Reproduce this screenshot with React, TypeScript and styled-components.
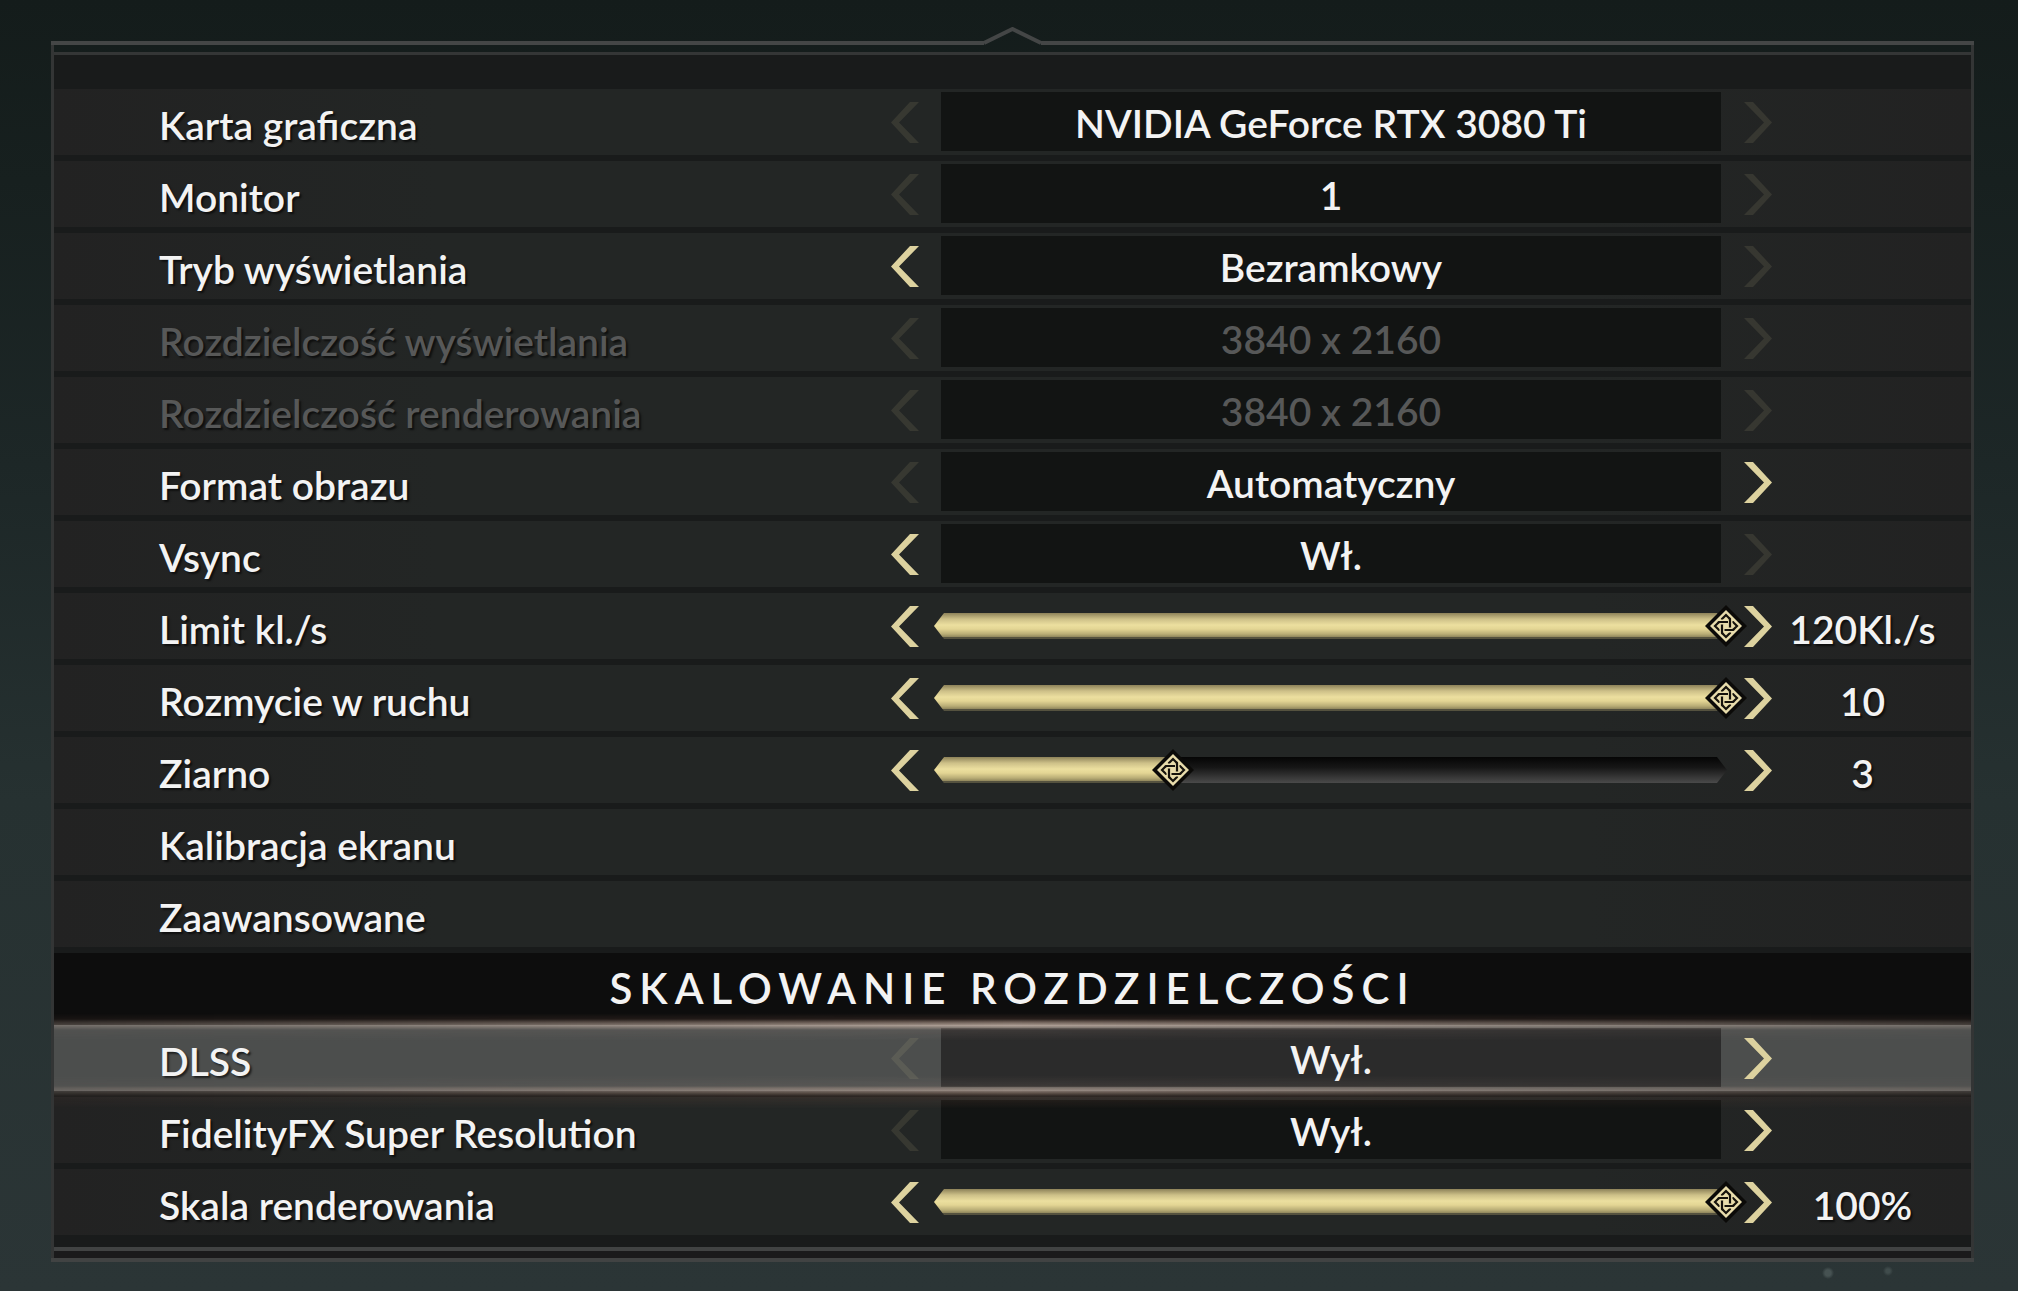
import React, { useState } from 'react';
import styled, { createGlobalStyle, css } from 'styled-components';

const GlobalStyle = createGlobalStyle`
  *, *::before, *::after { box-sizing: border-box; }
  body { margin: 0; background: #1b2424; }
`;

const Page = styled.main`
  min-height: 100vh;
  padding: 27px 44px 29px 51px;
  font-family: Lato, 'Open Sans', sans-serif;
  font-size: 39px;
  line-height: 48px;
  font-weight: 600;
  color: #f3f3f3;
  background:
    radial-gradient(circle at 1828px 1273px, #465252 0 3px, transparent 6px),
    radial-gradient(circle at 1888px 1271px, #404c4c 0 2px, transparent 5px),
    linear-gradient(180deg, #141c1b 0%, #17201f 14%, #1d2727 36%, #263131 62%, #2b3536 100%);
`;

const TopEdge = styled.div`
  display: flex;
  align-items: flex-end;
  height: 18px;
`;

const EdgeLine = styled.div`
  flex: 1;
  height: 4px;
  background: #444646;
`;

const Notch = styled.svg`
  display: block;
  width: 57px;
  height: 18px;
`;

const Frame = styled.section`
  border: solid #333535;
  border-width: 0 3px;
  padding-top: 7px;
`;

const Panel = styled.div`
  padding: 34px 0 12px;
  background: #191b1b;
  border-top: 3px solid #343636;
  border-bottom: 4px solid #414343;
`;

const Footer = styled.div`
  height: 7px;
  background: #1a1a1b;
`;

const BottomEdge = styled.div`
  height: 4px;
  background: #414343;
`;

const List = styled.div`
  display: grid;
  gap: 6px;
`;

const glow = css`
  z-index: 1;
  background: #4c4e4d;
  &::after {
    content: '';
    position: absolute;
    inset: -12px 0 -18px;
    pointer-events: none;
    background: linear-gradient(
      180deg,
      rgba(190, 130, 110, 0) 0,
      rgba(190, 130, 110, 0.15) 6px,
      rgba(206, 176, 160, 0.5) 9px,
      rgba(226, 204, 190, 0.7) 12px,
      rgba(216, 190, 176, 0.5) 14px,
      rgba(190, 160, 148, 0.12) 17px,
      rgba(190, 160, 148, 0) 28px,
      rgba(190, 160, 148, 0) 62px,
      rgba(190, 160, 148, 0.12) 73px,
      rgba(206, 176, 160, 0.4) 75px,
      rgba(216, 190, 176, 0.55) 78px,
      rgba(206, 170, 150, 0.4) 80px,
      rgba(190, 120, 95, 0.14) 83px,
      rgba(190, 120, 95, 0) 96px
    );
    mask-image: linear-gradient(90deg, rgba(0, 0, 0, 0.4), #000 50%, rgba(0, 0, 0, 0.4));
  }
`;

const columns = css`
  display: grid;
  grid-template-columns: minmax(0, 837fr) 50px minmax(0, 780fr) 51px minmax(0, 199fr);
  align-items: center;
  height: 66px;
  width: 100%;
`;

const Row = styled.div<{ $selected?: boolean }>`
  ${columns}
  position: relative;
  background: linear-gradient(90deg, #222222, #232625 20%, #232625 80%, #222222);
  ${(p) => p.$selected && glow}
`;

const RowButton = styled.button`
  ${columns}
  padding: 0;
  border: 0;
  background: linear-gradient(90deg, #222222, #232625 20%, #232625 80%, #222222);
  font: inherit;
  color: inherit;
  text-align: left;
  cursor: pointer;
`;

const Label = styled.span<{ $dim?: boolean }>`
  padding: 6px 0 0 105px;
  white-space: nowrap;
  color: ${(p) => (p.$dim ? '#575858' : 'inherit')};
  text-shadow: 2px 2px 2px rgba(0, 0, 0, 0.6);
`;

const Heading = styled.h2`
  height: 72px;
  margin: 0 0 -6px;
  background: #0d0d0d;
  font-size: 42px;
  font-weight: 600;
  line-height: 70px;
  letter-spacing: 7px;
  text-align: center;
  text-transform: uppercase;
`;

const ArrowButton = styled.button<{ $side: 'left' | 'right' }>`
  display: flex;
  justify-content: ${(p) => (p.$side === 'left' ? 'flex-start' : 'flex-end')};
  width: 100%;
  padding: 0;
  border: 0;
  background: none;
  color: #ddd29f;
  cursor: pointer;
  svg { display: block; }
  &:disabled { cursor: default; color: rgba(221, 210, 159, 0.11); }
`;

const ValueBox = styled.output<{ $dim?: boolean; $selected?: boolean }>`
  display: block;
  height: 59px;
  margin-bottom: 1px;
  padding-top: 2px;
  line-height: 58px;
  text-align: center;
  white-space: nowrap;
  background: ${(p) => (p.$selected ? '#2b2b2b' : '#121413')};
  color: ${(p) => (p.$dim ? '#575858' : 'inherit')};
`;

const Amount = styled.output`
  padding: 6px 18px 0 0;
  text-align: center;
  white-space: nowrap;
  text-shadow: 2px 2px 2px rgba(0, 0, 0, 0.6);
`;

const Slider = styled.div`
  position: relative;
  height: 26px;
  margin: 0 -6px 0 -7px;
`;

const Track = styled.div`
  height: 26px;
  background: linear-gradient(180deg, #050505, #161616 40%, #4a4a4a);
  clip-path: polygon(0 50%, 10px 0, calc(100% - 10px) 0, 100% 50%, calc(100% - 10px) 100%, 10px 100%);
`;

const Fill = styled.div`
  height: 26px;
  border-bottom: 2px solid #55523f;
  background: linear-gradient(180deg, #8d8259 0, #cdc088 6px, #ecdf9f 12px, #e3d594 16px, #b9ad76 21px, #8f865c 24px);
`;

const Rail = styled.div`
  position: absolute;
  inset: -8px 1px -8px 2px;
`;

const Thumb = styled.svg`
  position: absolute;
  top: 0;
  width: 42px;
  height: 42px;
  margin-left: -21px;
`;

const Range = styled.input`
  position: absolute;
  inset: 0;
  width: 100%;
  height: 100%;
  margin: 0;
  opacity: 0;
  cursor: pointer;
`;

function Arrow({ side, name, disabled, onClick }: { side: 'left' | 'right'; name: string; disabled?: boolean; onClick?: () => void }) {
  return (
    <ArrowButton type="button" $side={side} disabled={disabled} onClick={onClick} aria-label={name}>
      <svg width="28" height="41" viewBox="0 0 28 41" aria-hidden="true">
        <path
          fill="currentColor"
          d={side === 'left' ? 'M19 0H28L8 20.500L28 41H19L0 20.500Z' : 'M9 0H0L20 20.500L0 41H9L28 20.500Z'}
        />
      </svg>
    </ArrowButton>
  );
}

interface ChoiceProps {
  label: string;
  options: string[];
  start?: number;
  dim?: boolean;
  selected?: boolean;
}

function Choice({ label, options, start = 0, dim, selected }: ChoiceProps) {
  const [index, setIndex] = useState(start);
  return (
    <Row $selected={selected} role="group" aria-label={label}>
      <Label $dim={dim}>{label}</Label>
      <Arrow side="left" name={`${label}: poprzednia`} disabled={index === 0} onClick={() => setIndex(index - 1)} />
      <ValueBox $dim={dim} $selected={selected}>{options[index]}</ValueBox>
      <Arrow side="right" name={`${label}: następna`} disabled={index === options.length - 1} onClick={() => setIndex(index + 1)} />
      <span />
    </Row>
  );
}

const turns = [0, 90, 180, 270];

// Four looped strands; each long end passes over the short end of the next one.
function Knot({ left }: { left: string }) {
  return (
    <Thumb style={{ left }} viewBox="-21 -21 42 42" aria-hidden="true">
      <path d="M0 -21L21 0L0 21L-21 0Z" fill="#0b0a08" />
      <path d="M0 -16L16 0L0 16L-16 0Z" fill="#e8dcab" />
      <g fill="none" stroke="#15120c" strokeWidth="2.200">
        {turns.map((turn) => (
          <path key={turn} transform={`rotate(${turn})`} d="M-4 -1V-7L0 -11L4 -7" />
        ))}
        {turns.map((turn) => (
          <g key={turn} transform={`rotate(${turn})`}>
            <path d="M4 -6V-1" stroke="#e8dcab" strokeWidth="5" />
            <path d="M3 -8L4 -7V2" />
          </g>
        ))}
      </g>
    </Thumb>
  );
}

function Level({ id, label, min, max, start, unit = '' }: { id: string; label: string; min: number; max: number; start: number; unit?: string }) {
  const [value, setValue] = useState(start);
  const left = `${((value - min) / (max - min)) * 100}%`;
  return (
    <Row>
      <Label as="label" htmlFor={id}>{label}</Label>
      <Arrow side="left" name={`${label}: mniej`} disabled={value === min} onClick={() => setValue(value - 1)} />
      <Slider>
        <Track><Fill style={{ width: left }} /></Track>
        <Rail>
          <Knot left={left} />
          <Range id={id} type="range" min={min} max={max} value={value} onChange={(e) => setValue(Number(e.target.value))} />
        </Rail>
      </Slider>
      <Arrow side="right" name={`${label}: więcej`} onClick={() => setValue(Math.min(max, value + 1))} />
      <Amount htmlFor={id}>{value}{unit}</Amount>
    </Row>
  );
}

export default function App() {
  return (
    <>
      <GlobalStyle />
      <Page>
        <TopEdge>
          <EdgeLine />
          <Notch viewBox="0 0 57 18" aria-hidden="true">
            <path d="M0 16L28.500 2L57 16" fill="none" stroke="#444646" strokeWidth="4" />
          </Notch>
          <EdgeLine />
        </TopEdge>
        <Frame>
          <Panel>
            <List>
              <Choice label="Karta graficzna" options={['NVIDIA GeForce RTX 3080 Ti']} />
              <Choice label="Monitor" options={['1']} />
              <Choice label="Tryb wyświetlania" options={['Pełny ekran', 'Bezramkowy']} start={1} />
              <Choice label="Rozdzielczość wyświetlania" options={['3840 x 2160']} dim />
              <Choice label="Rozdzielczość renderowania" options={['3840 x 2160']} dim />
              <Choice label="Format obrazu" options={['Automatyczny', '16:9']} />
              <Choice label="Vsync" options={['Wył.', 'Wł.']} start={1} />
              <Level id="fps" label="Limit kl./s" min={30} max={120} start={120} unit="Kl./s" />
              <Level id="blur" label="Rozmycie w ruchu" min={0} max={10} start={10} />
              <Level id="grain" label="Ziarno" min={0} max={10} start={3} />
              <RowButton type="button"><Label>Kalibracja ekranu</Label></RowButton>
              <RowButton type="button"><Label>Zaawansowane</Label></RowButton>
              <Heading>Skalowanie rozdzielczości</Heading>
              <Choice label="DLSS" options={['Wył.', 'Jakość']} selected />
              <Choice label="FidelityFX Super Resolution" options={['Wył.', 'Jakość']} />
              <Level id="scale" label="Skala renderowania" min={50} max={100} start={100} unit="%" />
            </List>
          </Panel>
          <Footer />
        </Frame>
        <BottomEdge />
      </Page>
    </>
  );
}
